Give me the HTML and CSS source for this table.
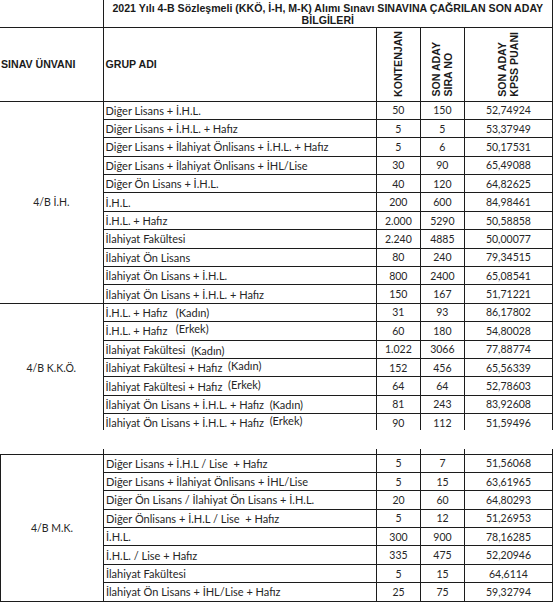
FILE: index.html
```html
<!DOCTYPE html>
<html lang="tr">
<head>
<meta charset="utf-8">
<title>2021 Yılı 4-B Sözleşmeli Alımı</title>
<link rel="stylesheet" href="styles.css">
</head>
<body>
<div class="sheet">
  <div class="upper">
    <table class="grid">
      <colgroup><col class="c1"><col class="c2"><col class="c3"><col class="c4"><col class="c5"></colgroup>
      <tr class="title-row">
        <td class="blank"></td>
        <td class="title" colspan="4">2021 Yılı 4-B Sözleşmeli (KKÖ, İ-H, M-K) Alımı Sınavı SINAVINA ÇAĞRILAN SON ADAY<br>BİLGİLERİ</td>
      </tr>
      <tr class="head-row">
        <td class="hd hd-first">SINAV ÜNVANI</td>
        <td class="hd hd-group">GRUP ADI</td>
        <td class="hd hd-vert"><div class="vert">KONTENJAN</div></td>
        <td class="hd hd-vert"><div class="vert">SON ADAY<br>SIRA NO</div></td>
        <td class="hd hd-vert"><div class="vert">SON ADAY<br>KPSS PUANI</div></td>
      </tr>
      <tr><td class="unvan" rowspan="11">4/B İ.H.</td><td class="grp">Diğer Lisans + İ.H.L.</td><td>50</td><td>150</td><td>52,74924</td></tr>
      <tr><td class="grp">Diğer Lisans + İ.H.L. + Hafız</td><td>5</td><td>5</td><td>53,37949</td></tr>
      <tr><td class="grp">Diğer Lisans + İlahiyat Önlisans + İ.H.L. + Hafız</td><td>5</td><td>6</td><td>50,17531</td></tr>
      <tr><td class="grp">Diğer Lisans + İlahiyat Önlisans + İHL/Lise</td><td>30</td><td>90</td><td>65,49088</td></tr>
      <tr><td class="grp">Diğer Ön Lisans + İ.H.L.</td><td>40</td><td>120</td><td>64,82625</td></tr>
      <tr><td class="grp">İ.H.L.</td><td>200</td><td>600</td><td>84,98461</td></tr>
      <tr><td class="grp">İ.H.L. + Hafız</td><td>2.000</td><td>5290</td><td>50,58858</td></tr>
      <tr><td class="grp">İlahiyat Fakültesi</td><td>2.240</td><td>4885</td><td>50,00077</td></tr>
      <tr><td class="grp">İlahiyat Ön Lisans</td><td>80</td><td>240</td><td>79,34515</td></tr>
      <tr><td class="grp">İlahiyat Ön Lisans + İ.H.L.</td><td>800</td><td>2400</td><td>65,08541</td></tr>
      <tr><td class="grp">İlahiyat Ön Lisans + İ.H.L. + Hafız</td><td>150</td><td>167</td><td>51,71221</td></tr>
      <tr><td class="unvan" rowspan="7">4/B K.K.Ö.</td><td class="grp">İ.H.L. + Hafız   <span class="note">(Kadın)</span></td><td>31</td><td>93</td><td>86,17802</td></tr>
      <tr><td class="grp">İ.H.L. + Hafız   <span class="note up">(Erkek)</span></td><td>60</td><td>180</td><td>54,80028</td></tr>
      <tr><td class="grp">İlahiyat Fakültesi  <span class="note dn">(Kadın)</span></td><td>1.022</td><td>3066</td><td>77,88774</td></tr>
      <tr><td class="grp">İlahiyat Fakültesi + Hafız  <span class="note up">(Kadın)</span></td><td>152</td><td>456</td><td>65,56339</td></tr>
      <tr><td class="grp">İlahiyat Fakültesi + Hafız  <span class="note up">(Erkek)</span></td><td>64</td><td>64</td><td>52,78603</td></tr>
      <tr><td class="grp">İlahiyat Ön Lisans + İ.H.L. + Hafız  <span class="note">(Kadın)</span></td><td>81</td><td>243</td><td>83,92608</td></tr>
      <tr><td class="grp">İlahiyat Ön Lisans + İ.H.L. + Hafız  <span class="note up">(Erkek)</span></td><td>90</td><td>112</td><td>51,59496</td></tr>
    </table>
  </div>
  <div class="lower">
    <table class="grid grid-lower">
      <colgroup><col class="c1"><col class="c2"><col class="c3"><col class="c4"><col class="c5"></colgroup>
      <tr class="stub-row"><td class="stub-first"></td><td></td><td></td><td></td><td></td></tr>
      <tr><td class="unvan first-col" rowspan="8">4/B M.K.</td><td class="grp">Diğer Lisans + İ.H.L / Lise  + Hafız</td><td>5</td><td>7</td><td>51,56068</td></tr>
      <tr><td class="grp">Diğer Lisans + İlahiyat Önlisans + İHL/Lise</td><td>5</td><td>15</td><td>63,61965</td></tr>
      <tr><td class="grp">Diğer Ön Lisans / İlahiyat Ön Lisans + İ.H.L.</td><td>20</td><td>60</td><td>64,80293</td></tr>
      <tr><td class="grp">Diğer Önlisans + İ.H.L / Lise  + Hafız</td><td>5</td><td>12</td><td>51,26953</td></tr>
      <tr><td class="grp">İ.H.L.</td><td>300</td><td>900</td><td>78,16285</td></tr>
      <tr><td class="grp">İ.H.L. / Lise + Hafız</td><td>335</td><td>475</td><td>52,20946</td></tr>
      <tr><td class="grp">İlahiyat Fakültesi</td><td>5</td><td>15</td><td>64,6114</td></tr>
      <tr><td class="grp">İlahiyat Ön Lisans + İHL/Lise + Hafız</td><td>25</td><td>75</td><td>59,32794</td></tr>
    </table>
  </div>
</div>
</body>
</html>
```
FILE: styles.css
```css
html, body {
  margin: 0;
  padding: 0;
  background: #ffffff;
}

.sheet {
  width: 554px;
}

.upper {
  height: 430px;
  overflow: hidden;
}

.lower {
  margin-top: 19px;
}

.grid {
  border-collapse: collapse;
  table-layout: fixed;
  width: 553px;
  font-family: Lato, "Open Sans", sans-serif;
  font-size: 10.5px;
  color: #262626;
}

.c1 { width: 103px; }
.c2 { width: 273px; }
.c3 { width: 44px; }
.c4 { width: 44px; }
.c5 { width: 88px; }

.grid td {
  border: 1px solid #1c1c1c;
  padding: 0;
  text-align: center;
  vertical-align: middle;
  white-space: pre;
  overflow: hidden;
}

.grid tr {
  height: 18.4px;
}

.grid td.grp {
  text-align: left;
  padding-left: 2px;
  font-size: 11px;
}

.grid td.unvan {
  border-left: none;
}

.grid-lower td.unvan.first-col {
  border-left: 1px solid #1c1c1c;
}

.note {
  position: relative;
}
.note.up { top: -2px; }
.note.dn { top: 1px; }

.grid tr.title-row { height: 27px; }

.grid td.blank {
  border-top: none;
  border-left: none;
}

.grid td.title {
  border-top: none;
  font-family: "Liberation Sans", Arial, sans-serif;
  font-weight: bold;
  font-size: 10.6px;
  line-height: 12px;
  color: #1a1a1a;
  text-align: center;
  vertical-align: top;
  padding-top: 2px;
  white-space: normal;
}

.grid tr.head-row { height: 74px; }

.grid td.hd {
  font-family: "Liberation Sans", Arial, sans-serif;
  font-weight: bold;
  font-size: 10.6px;
  color: #1a1a1a;
}

.grid td.hd-first {
  border-left: none;
  text-align: left;
  padding-left: 1px;
}

.grid td.hd-group {
  text-align: left;
  padding-left: 2px;
}

.grid td.hd-vert {
  vertical-align: bottom;
  padding-bottom: 4px;
}

.vert {
  writing-mode: vertical-rl;
  transform: rotate(180deg);
  line-height: 12px;
  text-align: left;
  margin: 0 auto;
  white-space: nowrap;
}

.grid tr.stub-row { height: 5px; }

.grid-lower tr.stub-row td {
  border-top: none;
  border-bottom: 1px solid #1c1c1c;
}

.grid-lower td.stub-first {
  border-left: none;
}
```
